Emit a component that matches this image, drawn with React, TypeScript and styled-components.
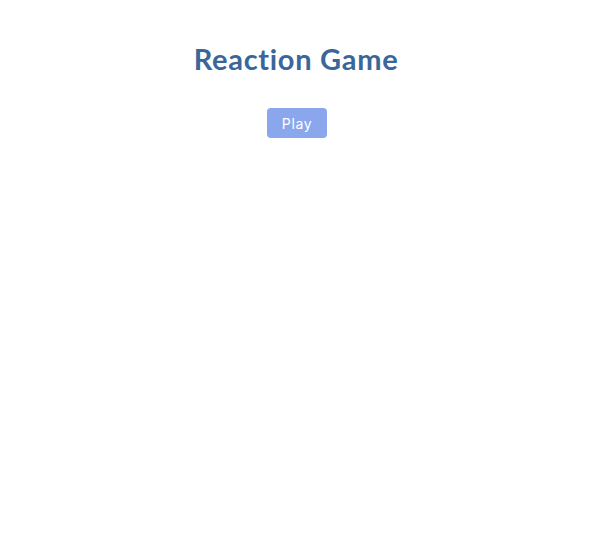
import React from "react";
import styled, { createGlobalStyle } from "styled-components";

const Global = createGlobalStyle`
  html, body { margin: 0; padding: 0; background: #fff; }
  body { font-family: Lato, "Noto Sans", sans-serif; }
`;

const Page = styled.div`
  display: flex;
  flex-direction: column;
  align-items: center;
  padding: 40px 2px 0 0;
`;

const Title = styled.h1`
  margin: 0 2px 0 0;
  font-family: Lato, "Noto Sans", sans-serif;
  font-weight: 700;
  font-size: 29px;
  line-height: 38px;
  color: #3b6699;
  letter-spacing: 0.7px;
`;

const PlayButton = styled.button`
  margin-top: 30px;
  width: 60px;
  height: 30px;
  border: none;
  border-radius: 4px;
  background: #8aa6ec;
  color: #fff;
  font-family: Inter, "Liberation Sans", sans-serif;
  font-size: 14px;
  letter-spacing: 0.6px;
  cursor: pointer;
`;

export default function App() {
  return (
    <>
      <Global />
      <Page>
        <Title>Reaction Game</Title>
        <PlayButton>Play</PlayButton>
      </Page>
    </>
  );
}
